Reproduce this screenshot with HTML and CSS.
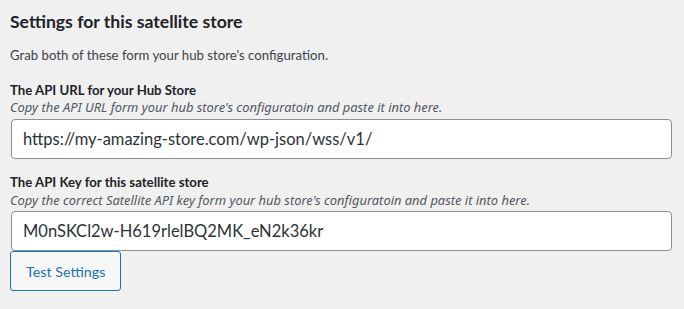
FILE: index.html
```html
<!DOCTYPE html>
<html lang="en">
<head>
    <meta charset="UTF-8">
    <meta name="viewport" content="width=device-width, initial-scale=1.0">
    <title>Satellite Store Settings</title>
    <link rel="stylesheet" href="styles.css">
</head>
<body>
    <div class="wrap">
        <h2 class="title">Settings for this satellite store</h2>
        <p class="intro">Grab both of these form your hub store's configuration.</p>
        <div class="field">
            <label for="api_url">The API URL for your Hub Store</label>
            <span class="hint">Copy the API URL form your hub store's configuratoin and paste it into here.</span>
            <input type="text" id="api_url" value="https://my-amazing-store.com/wp-json/wss/v1/">
        </div>
        <div class="field">
            <label for="api_key">The API Key for this satellite store</label>
            <span class="hint">Copy the correct Satellite API key form your hub store's configuratoin and paste it into here.</span>
            <input type="text" id="api_key" value="M0nSKCl2w-H619rlelBQ2MK_eN2k36kr">
        </div>
        <button type="button" class="button">Test Settings</button>
    </div>
</body>
</html>
```

FILE: styles.css
```css
body {
    margin: 0;
    background: #f0f0f1;
    color: #3c434a;
    font-family: Lato, "Noto Sans", sans-serif;
    font-size: 13.2px;
}
.wrap {
    padding: 10px 12px 0 10px;
}
.title {
    margin: 0;
    font-size: 17.6px;
    line-height: 24px;
    font-weight: bold;
    color: #1d2327;
}
.intro {
    margin: 11px 0 0;
    line-height: 20px;
}
.field {
    display: flex;
    flex-direction: column;
}
.field label {
    margin-top: 16px;
    font-weight: bold;
    color: #1d2327;
    line-height: 18px;
}
.field + .field label {
    margin-top: 14px;
}
.hint {
    font-family: "Noto Sans", sans-serif;
    font-size: 12.9px;
    font-style: italic;
    color: #50575e;
    line-height: 17px;
}
.field + .field .hint {
    line-height: 19px;
}
.field input {
    margin: 3px 0 0 1px;
    height: 40px;
    padding: 0 11px;
    border: 1px solid #8c8f94;
    border-radius: 4px;
    background: #fff;
    color: #2c3338;
    font-family: Lato, "Noto Sans", sans-serif;
    font-size: 16.5px;
    box-sizing: border-box;
}
.field + .field input {
    margin-top: 1px;
}
.button {
    margin-top: 0;
    height: 40px;
    padding: 0 15px;
    border: 1px solid #2271b1;
    border-radius: 3px;
    background: #f6f7f7;
    color: #2271b1;
    font-family: Lato, "Noto Sans", sans-serif;
    font-size: 14.3px;
    cursor: pointer;
}
```
